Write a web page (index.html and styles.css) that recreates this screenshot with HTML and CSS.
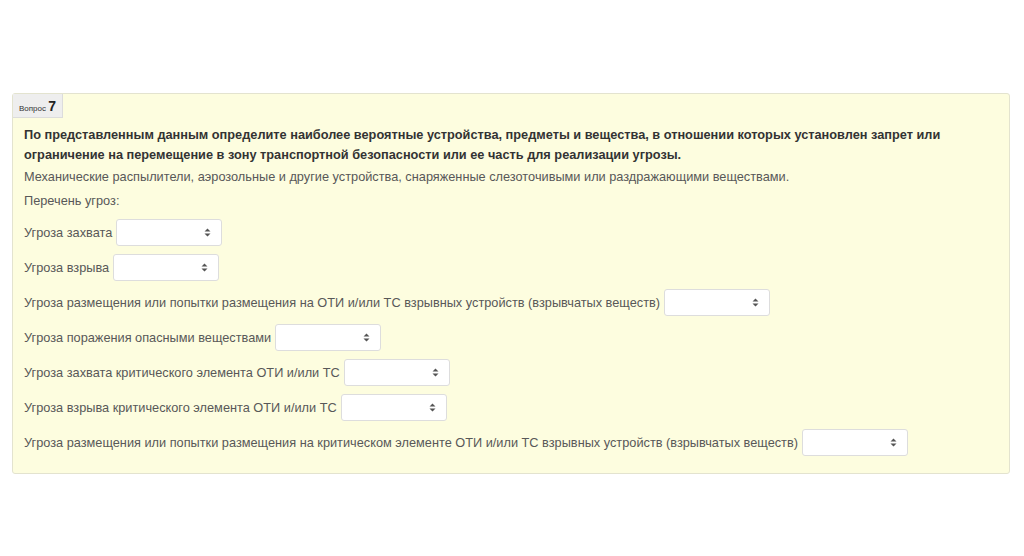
FILE: index.html
```html
<!DOCTYPE html>
<html lang="ru">
<head>
<meta charset="utf-8">
<link rel="stylesheet" href="styles.css">
</head>
<body>
<div class="card">
  <div class="badge">Вопрос <b>7</b></div>
  <div class="content">
    <p class="question">По представленным данным определите наиболее вероятные устройства, предметы и вещества, в отношении которых установлен запрет или ограничение на перемещение в зону транспортной безопасности или ее часть для реализации угрозы.</p>
    <p class="text t1">Механические распылители, аэрозольные и другие устройства, снаряженные слезоточивыми или раздражающими веществами.</p>
    <p class="text t2">Перечень угроз:</p>
    <div class="row"><span>Угроза захвата</span><div class="select"><svg width="7" height="9" viewBox="0 0 7 9"><path d="M0.5 3.5 L3.5 0.5 L6.5 3.5 Z M0.5 5.5 L3.5 8.5 L6.5 5.5 Z" fill="#555"/></svg></div></div>
    <div class="row"><span>Угроза взрыва</span><div class="select"><svg width="7" height="9" viewBox="0 0 7 9"><path d="M0.5 3.5 L3.5 0.5 L6.5 3.5 Z M0.5 5.5 L3.5 8.5 L6.5 5.5 Z" fill="#555"/></svg></div></div>
    <div class="row"><span>Угроза размещения или попытки размещения на ОТИ и/или ТС взрывных устройств (взрывчатых веществ)</span><div class="select"><svg width="7" height="9" viewBox="0 0 7 9"><path d="M0.5 3.5 L3.5 0.5 L6.5 3.5 Z M0.5 5.5 L3.5 8.5 L6.5 5.5 Z" fill="#555"/></svg></div></div>
    <div class="row"><span>Угроза поражения опасными веществами</span><div class="select"><svg width="7" height="9" viewBox="0 0 7 9"><path d="M0.5 3.5 L3.5 0.5 L6.5 3.5 Z M0.5 5.5 L3.5 8.5 L6.5 5.5 Z" fill="#555"/></svg></div></div>
    <div class="row"><span>Угроза захвата критического элемента ОТИ и/или ТС</span><div class="select"><svg width="7" height="9" viewBox="0 0 7 9"><path d="M0.5 3.5 L3.5 0.5 L6.5 3.5 Z M0.5 5.5 L3.5 8.5 L6.5 5.5 Z" fill="#555"/></svg></div></div>
    <div class="row"><span>Угроза взрыва критического элемента ОТИ и/или ТС</span><div class="select"><svg width="7" height="9" viewBox="0 0 7 9"><path d="M0.5 3.5 L3.5 0.5 L6.5 3.5 Z M0.5 5.5 L3.5 8.5 L6.5 5.5 Z" fill="#555"/></svg></div></div>
    <div class="row last"><span>Угроза размещения или попытки размещения на критическом элементе ОТИ и/или ТС взрывных устройств (взрывчатых веществ)</span><div class="select"><svg width="7" height="9" viewBox="0 0 7 9"><path d="M0.5 3.5 L3.5 0.5 L6.5 3.5 Z M0.5 5.5 L3.5 8.5 L6.5 5.5 Z" fill="#555"/></svg></div></div>
  </div>
</div>
</body>
</html>
```
FILE: styles.css
```css
html, body {
  margin: 0;
  padding: 0;
  background: #ffffff;
}
body {
  font-family: "Liberation Sans", Arial, sans-serif;
  font-size: 12.75px;
  color: #585858;
  padding-top: 93px;
}
.card {
  margin-left: 12px;
  width: 998px;
  background: #fdfddf;
  border: 1px solid #e3e3cf;
  border-radius: 3px;
  box-sizing: border-box;
  padding-bottom: 17px;
}
.badge {
  display: inline-block;
  background: #eeeeee;
  border-right: 1px solid #dcdcdc;
  border-bottom: 1px solid #dcdcdc;
  height: 24px;
  line-height: 24px;
  padding: 0 6px 0 6px;
  font-size: 8px;
  color: #333;
  box-sizing: border-box;
  vertical-align: top;
}
.badge b {
  font-size: 14px;
  font-weight: bold;
  color: #222;
}
.content {
  padding: 7px 11px 0 11px;
}
.question {
  margin: 0;
  font-weight: bold;
  color: #333;
  line-height: 20px;
}
.text {
  margin: 0;
  line-height: 20px;
}
.t1 { margin-top: 2px; }
.t2 { margin-top: 4px; margin-bottom: 8px; }
.row {
  display: flex;
  align-items: center;
  gap: 4px;
  height: 27px;
  margin-bottom: 8px;
}
.row.last { margin-bottom: 0; }
.select {
  width: 106px;
  height: 27px;
  box-sizing: border-box;
  background: #fff;
  border: 1px solid #dddddd;
  border-radius: 3px;
  display: flex;
  align-items: center;
  justify-content: flex-end;
  padding-right: 10px;
}
```
